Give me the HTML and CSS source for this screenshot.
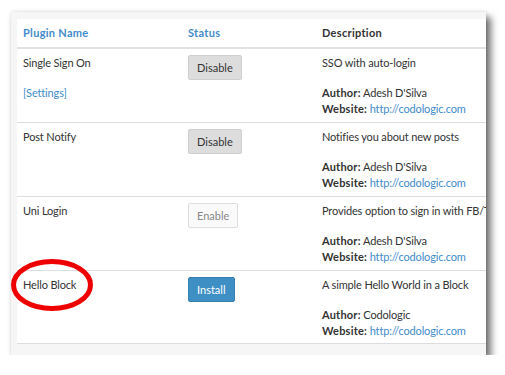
FILE: index.html
```html
<!DOCTYPE html>
<html lang="en">
<head>
    <meta charset="UTF-8">
    <title>Plugins</title>
    <link rel="stylesheet" href="styles.css">
</head>
<body>
<div class="frame">
    <div class="panel">
        <table class="plugins">
            <thead>
            <tr>
                <th class="col-name link-head">Plugin Name</th>
                <th class="col-status link-head">Status</th>
                <th class="col-desc">Description</th>
            </tr>
            </thead>
            <tbody>
            <tr>
                <td>
                    <div class="plugin-name">Single Sign On</div>
                    <a class="settings" href="#">[Settings]</a>
                </td>
                <td><button class="btn btn-disable">Disable</button></td>
                <td>
                    <p class="desc">SSO with auto-login</p>
                    <div class="meta"><b>Author:</b> Adesh D'Silva</div>
                    <div class="meta"><b>Website:</b> <a href="#">http://codologic.com</a></div>
                </td>
            </tr>
            <tr>
                <td><div class="plugin-name">Post Notify</div></td>
                <td><button class="btn btn-disable">Disable</button></td>
                <td>
                    <p class="desc">Notifies you about new posts</p>
                    <div class="meta"><b>Author:</b> Adesh D'Silva</div>
                    <div class="meta"><b>Website:</b> <a href="#">http://codologic.com</a></div>
                </td>
            </tr>
            <tr>
                <td><div class="plugin-name">Uni Login</div></td>
                <td><button class="btn btn-enable">Enable</button></td>
                <td>
                    <p class="desc">Provides option to sign in with FB/Twitter</p>
                    <div class="meta"><b>Author:</b> Adesh D'Silva</div>
                    <div class="meta"><b>Website:</b> <a href="#">http://codologic.com</a></div>
                </td>
            </tr>
            <tr>
                <td><div class="plugin-name">Hello Block</div></td>
                <td><button class="btn btn-install">Install</button></td>
                <td>
                    <p class="desc">A simple Hello World in a Block</p>
                    <div class="meta"><b>Author:</b> Codologic</div>
                    <div class="meta"><b>Website:</b> <a href="#">http://codologic.com</a></div>
                </td>
            </tr>
            </tbody>
        </table>
    </div>
    <svg class="circle" width="90" height="60" viewBox="0 0 90 60">
        <ellipse cx="41" cy="26" rx="38.5" ry="23.5" fill="none" stroke="#ee0000" stroke-width="5"/>
    </svg>
</div>
</body>
</html>
```

FILE: styles.css
```css
body {
    margin: 0;
    background: #fff;
    font-family: Lato, "Open Sans", sans-serif;
    font-size: 11px;
    letter-spacing: -0.15px;
    color: #333;
}

.frame {
    position: relative;
    margin: 12px 0 0 11px;
    width: 475px;
    height: 343px;
    background: #f6f6f6;
    box-shadow: 0 0 4px rgba(0, 0, 0, 0.12), 5px 5px 7px rgba(0, 0, 0, 0.55);
}

.panel {
    position: absolute;
    left: 6px;
    top: 7px;
    right: 0;
    bottom: 11px;
    background: #fff;
    border-bottom: 1px solid #ddd;
    overflow: hidden;
}

.plugins {
    border-collapse: collapse;
    width: 560px;
    table-layout: fixed;
}

.plugins th {
    text-align: left;
    font-weight: bold;
    letter-spacing: 0.3px;
    padding: 6px 6px 6px;
    line-height: 16px;
    border-bottom: 2px solid #e2e2e2;
}

.col-name { width: 153px; }
.col-status { width: 122px; }

.link-head {
    color: #428bca;
}

.plugins td {
    vertical-align: top;
    padding: 6px 6px 5px;
    line-height: 16px;
    border-bottom: 1px solid #ddd;
    white-space: nowrap;
}

.plugins tbody tr:last-child td {
    border-bottom: none;
}

.plugin-name {
    margin-bottom: 14px;
}

a {
    color: #428bca;
    text-decoration: none;
}

.desc {
    margin: 0 0 14px;
}

.meta b {
    font-weight: bold;
    letter-spacing: 0.2px;
}

.btn {
    font-family: Lato, "Open Sans", sans-serif;
    font-size: 11px;
    height: 25px;
    padding: 0 8px;
    border-radius: 2px;
    border: 1px solid #ccc;
    cursor: pointer;
}

.btn-disable {
    background: #dddddd;
    color: #333;
    border-color: #cfcfcf;
}

.btn-enable {
    background: #fafafa;
    color: #888;
    border-color: #ddd;
}

.btn-install {
    background: #3d8fc4;
    color: #fff;
    border-color: #357fae;
}

.circle {
    position: absolute;
    left: 0;
    top: 247px;
}
```
